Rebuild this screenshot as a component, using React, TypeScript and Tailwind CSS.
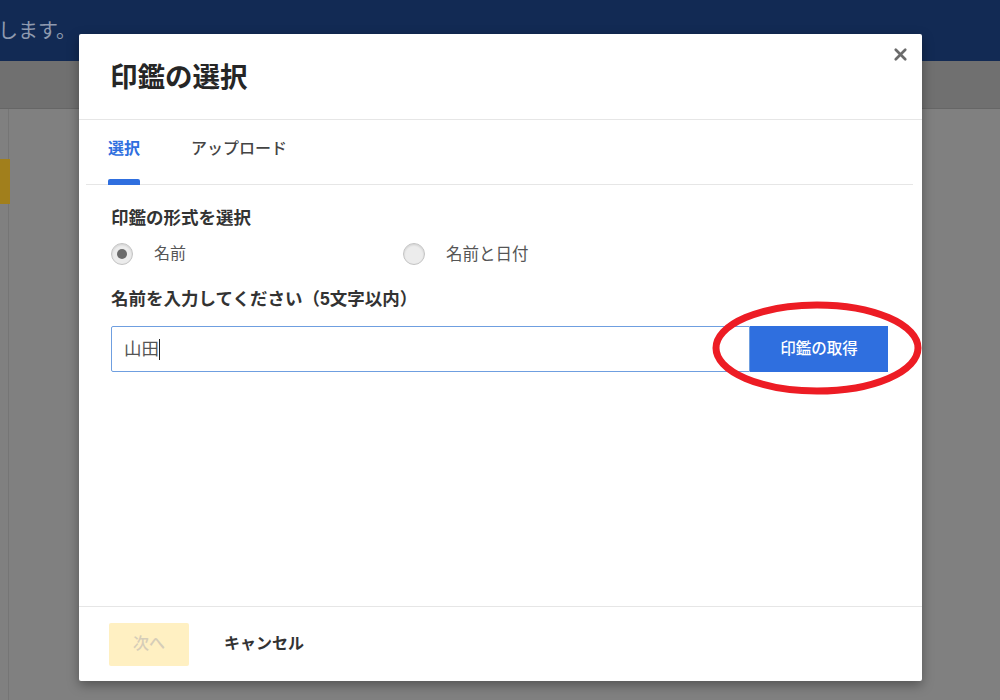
import React from 'react';
import { X } from 'lucide-react';

const font = 'font-["Liberation_Sans","Noto_Sans_CJK_JP",sans-serif]';

export default function App() {
  return (
    <div className={`relative h-[700px] w-[1000px] overflow-hidden bg-[#808080] ${font}`}>
      {/* page behind the overlay */}
      <div className="flex h-[61px] items-center overflow-hidden bg-[#122a54]">
        <span className="ml-[-42px] whitespace-nowrap text-[20px] text-[#8f9aaf]">いたします。</span>
      </div>
      <div className="h-[48px] border-b border-[#666666] bg-[#707070]" />
      <div className="flex h-[591px]">
        <div className="w-[9px] border-r border-[#757575] pt-[50px]">
          <div className="h-[45px] w-[10px] bg-[#a17f1c]" />
        </div>
      </div>

      {/* modal */}
      <div className="absolute left-[79px] top-[34px] flex h-[647px] w-[843px] flex-col rounded-[2px] bg-white shadow-[0_4px_12px_rgba(0,0,0,0.35)]">
        <button className="absolute right-[12px] top-[11px] text-[#6b6b6b]">
          <X size={19} strokeWidth={3.4} />
        </button>
        <div className="flex h-[86px] items-center border-b border-[#e6e6e6] pt-[2px] pl-[31px]">
          <h1 className="text-[27.5px] font-bold text-[#262626]">印鑑の選択</h1>
        </div>
        <div className="ml-[7px] mr-[9px] flex h-[65px] gap-[51px] border-b border-[#e6e6e6] pl-[22px]">
          <div className="flex h-[65px] w-[32px] flex-col items-center">
            <span className="mt-[17px] flex-1 text-[16px] font-bold whitespace-nowrap text-[#2f6fdf]">選択</span>
            <div className="h-[6px] w-[32px] rounded-t-[2px] bg-[#2f6fdf]" />
          </div>
          <span className="mt-[17px] text-[16px] font-medium text-[#444444]">アップロード</span>
        </div>
        <div className="flex-1 px-[32px] pt-[22px]">
          <p className="text-[17.5px] leading-[22px] font-bold text-[#333333]">印鑑の形式を選択</p>
          <div className="mt-[13px] flex h-[24px] items-center">
            <div className="flex w-[292px] items-center">
              <div className="flex h-[22px] w-[22px] items-center justify-center rounded-full border border-[#c4c4c4] bg-[#ececec] shadow-[inset_0_1px_2px_rgba(0,0,0,0.12)]">
                <div className="h-[10px] w-[10px] rounded-full bg-[#6b6b6b]" />
              </div>
              <span className="ml-[21px] text-[16px] text-[#555555]">名前</span>
            </div>
            <div className="flex items-center">
              <div className="h-[22px] w-[22px] rounded-full border border-[#c4c4c4] bg-[#ececec] shadow-[inset_0_1px_2px_rgba(0,0,0,0.12)]" />
              <span className="ml-[21px] text-[16.5px] text-[#555555]">名前と日付</span>
            </div>
          </div>
          <p className="mt-[22px] text-[17.5px] leading-[22px] font-bold text-[#333333]">名前を入力してください（5文字以内）</p>
          <div className="mt-[16px] flex h-[46px] w-[777px]">
            <div className="flex flex-1 items-center rounded-l-[2px] border border-[#6f9fe0] pl-[12px] text-[17.5px] text-[#555555]">
              山田<span className="h-[21px] w-px bg-[#222222]" />
            </div>
            <button className="w-[138px] bg-[#2f6fdf] text-[15.5px] font-medium text-white">印鑑の取得</button>
          </div>
        </div>
        <div className="flex h-[75px] items-center border-t border-[#e6e6e6] pl-[30px]">
          <button className="h-[43px] w-[80px] rounded-[2px] bg-[#fff0c2] text-[16px] font-medium text-[#d6cdb8]">次へ</button>
          <span className="ml-[35px] text-[16px] font-bold text-[#333333]">キャンセル</span>
        </div>
      </div>

      {/* red marker circled by hand on the screenshot */}
      <svg className="absolute left-[708px] top-[296px]" width="218" height="104" viewBox="0 0 218 104" fill="none">
        <ellipse cx="109" cy="52" rx="101" ry="43" stroke="#ed1c24" strokeWidth="7" />
      </svg>
    </div>
  );
}
